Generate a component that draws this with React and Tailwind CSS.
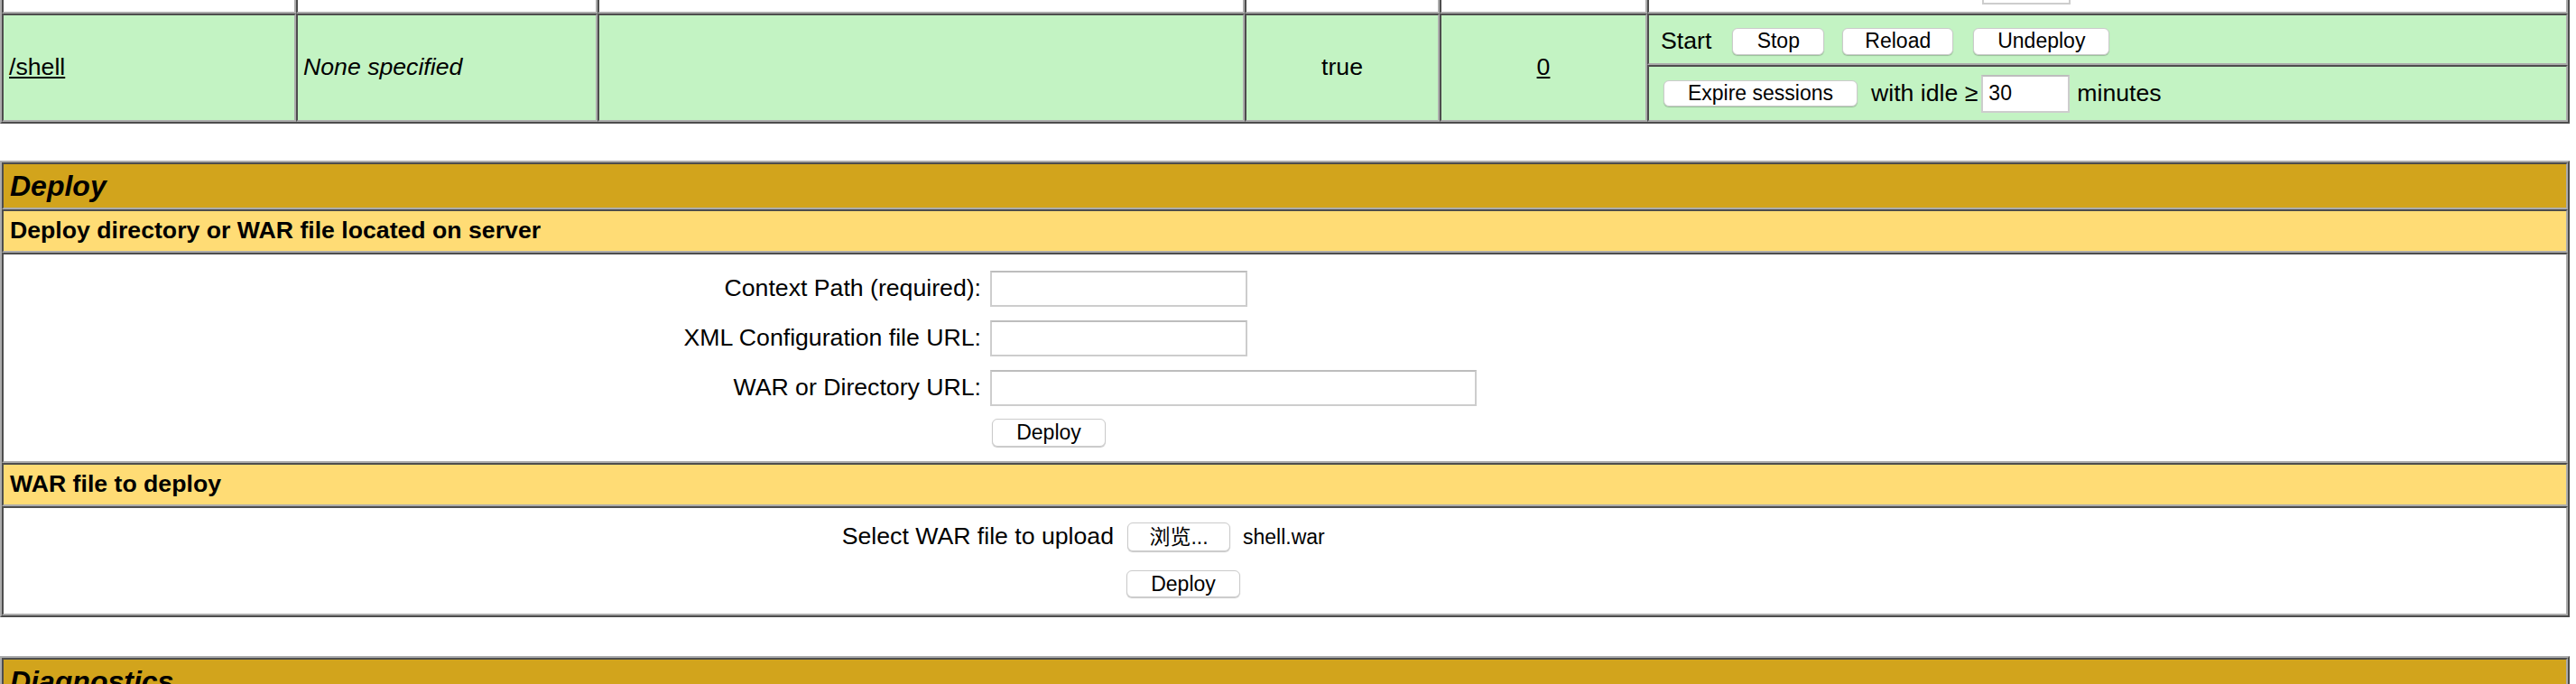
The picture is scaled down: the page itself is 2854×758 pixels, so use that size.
import React from "react";

const outer =
  "w-[2847px] border-2 border-t-[#acacac] border-l-[#acacac] border-r-[#4d4d4d] border-b-[#4d4d4d]";
const cell =
  "border-2 border-t-[#4d4d4d] border-l-[#4d4d4d] border-r-[#acacac] border-b-[#acacac]";
const btn =
  "flex items-center justify-center bg-white rounded-[6px] border border-[#cbcbcb] shadow-[0_1px_1px_rgba(0,0,0,0.22)] text-[23px] leading-none text-black";
const field = "bg-white border-2 border-[#cdcdcd] border-t-[#bdbdbd] text-[23px] px-[6px] outline-none";

// only the bottom edge of the previous application's row is in view
function PrevRow() {
  return (
    <>
      <div className={`${cell} bg-white row-span-2`}></div>
      <div className={`${cell} bg-white row-span-2`}></div>
      <div className={`${cell} bg-white row-span-2`}></div>
      <div className={`${cell} bg-white row-span-2`}></div>
      <div className={`${cell} bg-white row-span-2`}></div>
      <div className={`${cell} bg-white`}></div>
      <div className={`${cell} bg-white flex items-center pl-[16px]`}>
        <div className={`${btn} w-[215px] h-[29px]`}></div>
        <div className="ml-[16px] w-[118px]"></div>
        <div className={`${field} ml-[4px] w-[98px] h-[42px]`}></div>
      </div>
    </>
  );
}

function AppRow({ bg, path, name, running, sessions }) {
  return (
    <>
      <div className={`${cell} ${bg} row-span-2 flex items-center pl-[6px]`}>
        <a className="underline" href="#">{path}</a>
      </div>
      <div className={`${cell} ${bg} row-span-2 flex items-center pl-[6px] italic`}>{name}</div>
      <div className={`${cell} ${bg} row-span-2`}></div>
      <div className={`${cell} ${bg} row-span-2 flex items-center justify-center`}>{running}</div>
      <div className={`${cell} ${bg} row-span-2 flex items-center justify-center`}>
        <a className="underline" href="#">{sessions}</a>
      </div>
      <div className={`${cell} ${bg} flex items-center pl-[13px] pt-[4px]`}>
        <span>Start</span>
        <button className={`${btn} ml-[23px] w-[102px] h-[30px]`}>Stop</button>
        <button className={`${btn} ml-[20px] w-[123px] h-[30px]`}>Reload</button>
        <button className={`${btn} ml-[22px] w-[151px] h-[30px]`}>Undeploy</button>
      </div>
      <div className={`${cell} ${bg} flex items-center pl-[16px]`}>
        <button className={`${btn} w-[215px] h-[29px]`}>Expire sessions</button>
        <span className="ml-[15px]">with idle ≥</span>
        <input className={`${field} ml-[4px] w-[98px] h-[42px]`} defaultValue="30" />
        <span className="ml-[8px]">minutes</span>
      </div>
    </>
  );
}

function FormRow({ label, children, h = "h-[55px]" }) {
  return (
    <div className={`flex items-center ${h}`}>
      <div className="w-[1083px] text-right">{label}</div>
      {children}
    </div>
  );
}

export default function App() {
  return (
    <div className="min-h-screen bg-white text-black text-[26.67px] leading-tight font-['Liberation_Sans','Noto_Sans_CJK_SC',sans-serif]">
      {/* application list (tail end) */}
      <div className="h-[137px] overflow-hidden">
        <div
          className={`${outer} -mt-[107px] grid grid-cols-[326px_334px_717px_216px_230px_1020px] grid-rows-[57px_63px_57px_63px]`}
        >
          <PrevRow />
          <AppRow
            bg="bg-[#c3f3c3]"
            path="/shell"
            name="None specified"
            running="true"
            sessions={0}
          />
        </div>
      </div>

      {/* Deploy */}
      <div className={`${outer} mt-[41px]`}>
        <div className={`${cell} h-[52px] bg-[#d2a41c] flex items-center pl-[7px] text-[32px] font-bold italic`}>
          Deploy
        </div>
        <div className={`${cell} h-[48px] bg-[#ffdc75] flex items-center pl-[7px] font-bold`}>
          Deploy directory or WAR file located on server
        </div>
        <div className={`${cell} h-[233px] pt-[10px]`}>
          <FormRow label="Context Path (required):">
            <input className={`${field} ml-[10px] w-[285px] h-[40px]`} />
          </FormRow>
          <FormRow label="XML Configuration file URL:">
            <input className={`${field} ml-[10px] w-[285px] h-[40px]`} />
          </FormRow>
          <FormRow label="WAR or Directory URL:">
            <input className={`${field} ml-[10px] w-[539px] h-[40px]`} />
          </FormRow>
          <FormRow label="" h="h-[45px]">
            <button className={`${btn} ml-[12px] w-[126px] h-[31px]`}>Deploy</button>
          </FormRow>
        </div>
        <div className={`${cell} h-[48px] bg-[#ffdc75] flex items-center pl-[7px] font-bold`}>
          WAR file to deploy
        </div>
        <div className={`${cell} h-[121px] pt-[10px]`}>
          <div className="flex items-center h-[44px]">
            <div className="w-[1230px] text-right">Select WAR file to upload</div>
            <button className={`${btn} ml-[15px] w-[114px] h-[32px]`}>浏览...</button>
            <span className="ml-[14px] text-[23px]">shell.war</span>
          </div>
          <div className="flex items-center h-[44px] mt-[8px]">
            <div className="w-[1230px]"></div>
            <button className={`${btn} ml-[14px] w-[126px] h-[30px]`}>Deploy</button>
          </div>
        </div>
      </div>

      {/* Diagnostics */}
      <div className={`${outer} mt-[43px]`}>
        <div className={`${cell} h-[52px] bg-[#d2a41c] flex items-center pl-[7px] text-[32px] font-bold italic`}>
          Diagnostics
        </div>
      </div>
    </div>
  );
}
